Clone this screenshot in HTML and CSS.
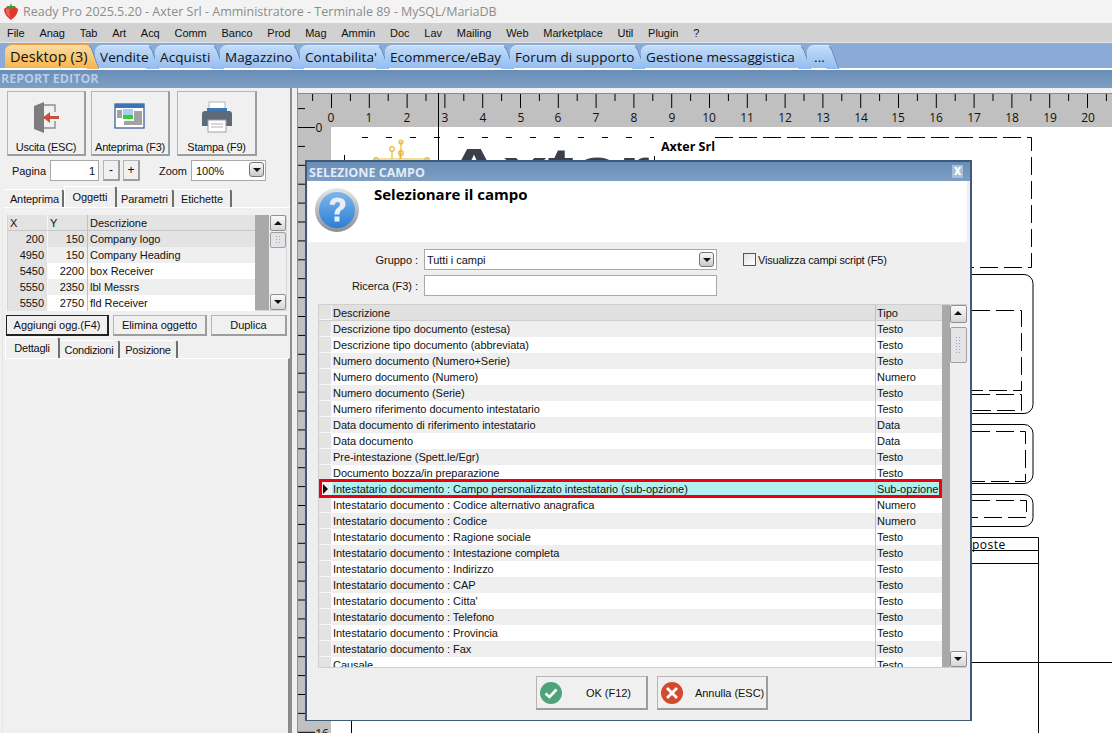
FILE: index.html
```html
<!DOCTYPE html>
<html lang="it">
<head>
<meta charset="utf-8">
<title>Ready Pro</title>
<link rel="stylesheet" href="styles.css">
</head>
<body>
<div class="app">
  <header class="titlebar">
    <svg class="berry" width="16" height="17" viewBox="0 0 16 17"><path d="M1 6 Q4 3 8 4 Q12 3 15 6 Q15 12 8 17 Q1 12 1 6Z" fill="#e2352b"/><path d="M3 6 Q5 5 7 6 Q5 10 8 15 Q2 11 3 6Z" fill="#f0675a"/><path d="M8 0 L9 3 L13 3 L10 5 L8 6 L6 5 L3 3 L7 3Z" fill="#3f9a3a"/></svg>
    <span>Ready Pro 2025.5.20 - Axter Srl - Amministratore - Terminale 89 - MySQL/MariaDB</span>
  </header>
  <nav class="menubar">
    <span>File</span><span>Anag</span><span>Tab</span><span>Art</span><span>Acq</span><span>Comm</span><span>Banco</span><span>Prod</span><span>Mag</span><span>Ammin</span><span>Doc</span><span>Lav</span><span>Mailing</span><span>Web</span><span>Marketplace</span><span>Util</span><span>Plugin</span><span>?</span>
  </nav>
  <div class="tabstrip">
    <div class="apptab active w-desktop">Desktop (3)</div>
    <div class="apptab w-vendite">Vendite</div>
    <div class="apptab w-acquisti">Acquisti</div>
    <div class="apptab w-magazzino">Magazzino</div>
    <div class="apptab w-contab">Contabilita'</div>
    <div class="apptab w-ecom">Ecommerce/eBay</div>
    <div class="apptab w-forum">Forum di supporto</div>
    <div class="apptab w-gest">Gestione messaggistica</div>
    <div class="apptab w-more">...</div>
  </div>
  <div class="sectionbar">REPORT EDITOR</div>
  <div class="workspace">
    <aside class="side">
      <div class="toolrow">
        <button class="toolbtn">
          <svg width="34" height="34" viewBox="0 0 34 34"><path d="M15 5 H26 V12 M26 21 V28 H15" fill="none" stroke="#8d8d8d" stroke-width="1.4"/><path d="M5 6 L15 2 V33 L5 29Z" fill="#7d7d7d"/><path d="M15 16 H30 V19 H15Z" fill="#c9523c"/><path d="M14 17.5 L21 12 V23Z" fill="#c9523c"/></svg>
          <span>Uscita (ESC)</span>
        </button>
        <button class="toolbtn">
          <svg width="34" height="34" viewBox="0 0 34 34"><rect x="2" y="4" width="29" height="24" fill="#fff" stroke="#2f5590" stroke-width="1.2"/><rect x="2" y="4" width="29" height="4" fill="#3d74b8"/><rect x="10" y="9" width="10" height="6" fill="#a9cdf0"/><rect x="10" y="15" width="10" height="4" fill="#2fd12f"/><path d="M4 11 H9 M4 13 H9 M4 15 H9 M4 17 H9 M21 12 H29 M21 14 H29 M21 16 H29 M21 18 H29 M21 20 H29 M11 22 H29 M11 24 H29" stroke="#444" stroke-width="1"/></svg>
          <span>Anteprima (F3)</span>
        </button>
        <button class="toolbtn wide">
          <svg width="34" height="34" viewBox="0 0 34 34"><rect x="9" y="2" width="16" height="7" fill="#fff" stroke="#b5b5b5"/><path d="M7 8 H27 V16 H7Z" fill="#3f76b4"/><path d="M2 14 Q2 11 5 11 H29 Q32 11 32 14 V26 H2Z" fill="#5d6a78"/><rect x="8" y="20" width="18" height="12" fill="#fff" stroke="#a0a0a0"/><path d="M11 24 H23 M11 27 H23" stroke="#b0b0b0"/></svg>
          <span>Stampa (F9)</span>
        </button>
      </div>
      <div class="pagerow">
        <label class="pagelabel">Pagina</label>
        <div class="field pagefield">1</div>
        <button class="mini">-</button>
        <button class="mini">+</button>
        <label class="zoomlabel">Zoom</label>
        <div class="field zoomfield">100%<span class="drop small"></span></div>
      </div>
      <div class="pagetabs">
        <span class="ptab t-ant">Anteprima</span><span class="ptab on t-ogg">Oggetti</span><span class="ptab t-par">Parametri</span><span class="ptab t-eti">Etichette</span>
      </div>
      <div class="sheet">
        <div class="objgrid">
          <div class="objtable">
            <div class="objrow head"><span>X</span><span>Y</span><span>Descrizione</span></div>
            <div class="objrow sel"><span class="n">200</span><span class="n">150</span><span>Company logo</span></div>
            <div class="objrow alt"><span class="n">4950</span><span class="n">150</span><span>Company Heading</span></div>
            <div class="objrow"><span class="n">5450</span><span class="n">2200</span><span>box Receiver</span></div>
            <div class="objrow alt"><span class="n">5550</span><span class="n">2350</span><span>lbl Messrs</span></div>
            <div class="objrow"><span class="n">5550</span><span class="n">2750</span><span>fld Receiver</span></div>
          </div>
          <div class="gutter"></div>
          <div class="vscroll">
            <button class="sbtn up"></button>
            <div class="thumb short"></div>
            <div class="track"></div>
            <button class="sbtn down"></button>
          </div>
        </div>
        <div class="objbtns">
          <button class="plain focus">Aggiungi ogg.(F4)</button>
          <button class="plain el">Elimina oggetto</button>
          <button class="plain du">Duplica</button>
        </div>
        <div class="pagetabs sub">
          <span class="ptab on t-det">Dettagli</span><span class="ptab t-con">Condizioni</span><span class="ptab t-pos">Posizione</span>
        </div>
        <div class="subsheet"></div>
      </div>
    </aside>
    <div class="splitter"></div>
    <main class="stage">
      <svg class="canvas" width="814" height="640" viewBox="298 93 814 640">
        <defs>
          <pattern id="hticks" x="331" y="94" width="37.8" height="14" patternUnits="userSpaceOnUse">
            <path d="M0.5 0 V14 M19.4 0 V7" stroke="#000" fill="none"/>
          </pattern>
          <pattern id="vticks" x="298" y="127" width="20" height="37.8" patternUnits="userSpaceOnUse">
            <path d="M0 0.5 H19 M0 19.4 H7" stroke="#000" fill="none"/>
          </pattern>
        </defs>
        <rect x="298" y="93" width="814" height="640" fill="#c0c0c0"/>
        <rect x="298" y="93" width="814" height="1" fill="#8c8c8c"/>
        <rect x="312" y="94" width="800" height="14" fill="url(#hticks)"/>
        <rect x="298" y="108" width="17" height="625" fill="url(#vticks)"/>
        <rect x="331" y="127" width="781" height="606" fill="#fff"/>
        <g class="rulertext" text-anchor="middle">
          <text x="331" y="122">0</text><text x="369" y="122">1</text><text x="407" y="122">2</text><text x="445" y="122">3</text><text x="483" y="122">4</text><text x="521" y="122">5</text><text x="558" y="122">6</text><text x="596" y="122">7</text><text x="634" y="122">8</text><text x="672" y="122">9</text><text x="709" y="122">10</text><text x="747" y="122">11</text><text x="785" y="122">12</text><text x="823" y="122">13</text><text x="861" y="122">14</text><text x="898" y="122">15</text><text x="936" y="122">16</text><text x="974" y="122">17</text><text x="1012" y="122">18</text><text x="1050" y="122">19</text><text x="1088" y="122">20</text>
          <text x="319" y="132">0</text><text x="322" y="738">16</text>
        </g>
        <g fill="none" stroke="#000">
          <path d="M438.5 93 V162 M344.5 155 V162 M654.5 156 V162"/>
          <path class="dash-s" d="M362 137.5 H654"/>
          <path class="dash-l" d="M715 137.5 H1031.5 V267.5 H972"/>
          <rect x="960" y="274.5" width="73" height="139" rx="9"/>
          <path class="dash-l" d="M972 310.5 H1021.5 V390.5 H972 M972 394.5 H1021.5 V410.5 H972"/>
          <rect x="960" y="424.5" width="73" height="59" rx="9"/>
          <path class="dash-l" d="M972 431.5 H1025.5 V481.5 H972"/>
          <rect x="960" y="494.5" width="73" height="32" rx="9"/>
          <path class="dash-l" d="M972 500.5 H1026.5 V517.5 H972"/>
          <path d="M972 537.5 H1038.5 V733 M972 550.5 H1038.5 M972 563.5 H1038.5 M972 662.5 H1112 M351.5 720 V733"/>
        </g>
        <text class="poste" x="972" y="549">poste</text>
        <text class="company" x="661" y="151">Axter Srl</text>
        <text class="bigbrand" x="445" y="187" textLength="205" lengthAdjust="spacingAndGlyphs">Axter</text>
        <g fill="none" stroke="#e8b93a" stroke-width="1.2">
          <path d="M375 160 V159 H428 V160 M400 159 V150 M401 159 V141"/>
          <circle cx="392" cy="149" r="2.3"/><circle cx="401" cy="153" r="2.3"/><circle cx="401" cy="142" r="2"/><circle cx="376" cy="160" r="2.3"/><circle cx="427" cy="160" r="2.3"/>
          <path d="M392 151 V159"/>
        </g>
      </svg>
    </main>
  </div>

  <section class="dialog">
    <div class="dlgtitle"><span>SELEZIONE CAMPO</span><span class="closex">X</span></div>
    <div class="dlghead">
      <svg width="46" height="46" viewBox="0 0 46 46"><defs><linearGradient id="qb" x1="0" y1="0" x2="0" y2="1"><stop offset="0" stop-color="#7fb6ea"/><stop offset="1" stop-color="#2c7fd6"/></linearGradient><linearGradient id="qr" x1="0" y1="0" x2="0" y2="1"><stop offset="0" stop-color="#e6e6e6"/><stop offset="1" stop-color="#8a8f96"/></linearGradient></defs><circle cx="23" cy="23" r="22" fill="url(#qr)"/><circle cx="23" cy="23" r="18" fill="url(#qb)"/><path d="M15.5 17.5 Q16 10.5 23.5 10.5 Q31.5 10.5 31.5 17 Q31.5 21 27.5 23 Q25.5 24.2 25.5 27.5 H20.5 Q20.5 22.5 24 20.5 Q26 19.3 26 17.2 Q26 15 23.3 15 Q21 15 20.8 18Z" fill="#e8eef8"/><rect x="20.5" y="29.5" width="5" height="5" fill="#e8eef8"/></svg>
      <h1>Selezionare il campo</h1>
    </div>
    <div class="dlgbody">
      <div class="formrow">
        <label>Gruppo :</label>
        <div class="field wide-field">Tutti i campi<span class="drop"></span></div>
        <span class="check"></span><span class="checklabel">Visualizza campi script (F5)</span>
      </div>
      <div class="formrow second">
        <label>Ricerca (F3) :</label>
        <div class="field wide-field"></div>
      </div>
      <div class="fieldgrid">
        <div class="rows">
          <div class="row head"><i></i><span>Descrizione</span><span>Tipo</span></div>
          <div class="row alt"><i></i><span>Descrizione tipo documento (estesa)</span><span>Testo</span></div>
          <div class="row"><i></i><span>Descrizione tipo documento (abbreviata)</span><span>Testo</span></div>
          <div class="row alt"><i></i><span>Numero documento (Numero+Serie)</span><span>Testo</span></div>
          <div class="row"><i></i><span>Numero documento (Numero)</span><span>Numero</span></div>
          <div class="row alt"><i></i><span>Numero documento (Serie)</span><span>Testo</span></div>
          <div class="row"><i></i><span>Numero riferimento documento intestatario</span><span>Testo</span></div>
          <div class="row alt"><i></i><span>Data documento di riferimento intestatario</span><span>Data</span></div>
          <div class="row"><i></i><span>Data documento</span><span>Data</span></div>
          <div class="row alt"><i></i><span>Pre-intestazione (Spett.le/Egr)</span><span>Testo</span></div>
          <div class="row"><i></i><span>Documento bozza/in preparazione</span><span>Testo</span></div>
          <div class="row current"><i></i><span>Intestatario documento : Campo personalizzato intestatario (sub-opzione)</span><span>Sub-opzione</span></div>
          <div class="row"><i></i><span>Intestatario documento : Codice alternativo anagrafica</span><span>Numero</span></div>
          <div class="row alt"><i></i><span>Intestatario documento : Codice</span><span>Numero</span></div>
          <div class="row"><i></i><span>Intestatario documento : Ragione sociale</span><span>Testo</span></div>
          <div class="row alt"><i></i><span>Intestatario documento : Intestazione completa</span><span>Testo</span></div>
          <div class="row"><i></i><span>Intestatario documento : Indirizzo</span><span>Testo</span></div>
          <div class="row alt"><i></i><span>Intestatario documento : CAP</span><span>Testo</span></div>
          <div class="row"><i></i><span>Intestatario documento : Citta'</span><span>Testo</span></div>
          <div class="row alt"><i></i><span>Intestatario documento : Telefono</span><span>Testo</span></div>
          <div class="row"><i></i><span>Intestatario documento : Provincia</span><span>Testo</span></div>
          <div class="row alt"><i></i><span>Intestatario documento : Fax</span><span>Testo</span></div>
          <div class="row"><i></i><span>Causale</span><span>Testo</span></div>
        </div>
        <div class="gutter"></div>
        <div class="vscroll big">
          <button class="sbtn up tall"></button>
          <div class="thumb"></div>
          <div class="track"></div>
          <button class="sbtn down"></button>
        </div>
      </div>
      <div class="dlgbtns">
        <button class="dlgbtn ok">
          <svg width="24" height="24" viewBox="0 0 24 24"><circle cx="12" cy="12" r="11" fill="#4fa37a"/><path d="M6.5 12.5 L10.5 16 L17.5 8.5" fill="none" stroke="#fff" stroke-width="2.6"/></svg>
          <span>OK (F12)</span>
        </button>
        <button class="dlgbtn cancel">
          <svg width="24" height="24" viewBox="0 0 24 24"><circle cx="12" cy="12" r="11" fill="#d14b2f"/><path d="M7 7 L17 17 M17 7 L7 17" fill="none" stroke="#fff" stroke-width="2.8"/></svg>
          <span>Annulla (ESC)</span>
        </button>
      </div>
    </div>
  </section>
</div>
</body>
</html>
```
FILE: styles.css
```css
* { box-sizing: border-box; }
html, body { margin: 0; padding: 0; }
body { width: 1112px; height: 733px; overflow: hidden; background: #f0f0f0; font-family: "Liberation Sans", Arial, sans-serif; font-size: 11px; letter-spacing: -.04px; color: #111; }
button { font: inherit; letter-spacing: inherit; color: inherit; padding: 0; margin: 0; }
.app { position: relative; width: 1112px; height: 733px; overflow: hidden; display: flex; flex-direction: column; }

.titlebar { height: 23px; flex: none; background: #f3f3f3; display: flex; align-items: center; gap: 4px; padding-left: 3px; color: #8c8c8c; font-family: "Open Sans", sans-serif; font-size: 12.5px; letter-spacing: 0; }
.menubar { height: 20px; flex: none; background: #d1d1d1; border-bottom: 1px solid #e4e4e4; display: flex; align-items: center; gap: 14.8px; padding-left: 7px; font-size: 11px; }

.tabstrip { position: relative; z-index: 0; height: 27px; flex: none; background: #8aabd8; display: flex; align-items: flex-end; padding: 0 0 0 5px; font-family: "Open Sans", sans-serif; font-size: 13.5px; border-bottom: 2px solid #fff; }
.apptab { position: relative; height: 23px; margin-right: 6px; padding: 2px 0 0 5px; background: linear-gradient(#c3dcf8, #93bdf0); border-radius: 7px 0 0 0; border-top: 1px solid #d8e8fa; white-space: nowrap; letter-spacing: .1px; }
.apptab::after { content: ""; position: absolute; z-index: -1; top: -1px; right: -6px; width: 12px; height: 23px; background: linear-gradient(#c3dcf8, #93bdf0); border-top: 1px solid #d8e8fa; border-right: 1px solid #5f86b8; border-radius: 0 6px 0 0; transform: skewX(20deg); }
.apptab.active { z-index: 2; height: 24px; font-size: 14.5px; padding-top: 2px; background: linear-gradient(#fbdca4, #f7b44c); border-top-color: #e9a447; }
.apptab.active::after { background: linear-gradient(#fbdca4, #f7b44c); height: 24px; border-top-color: #e9a447; }
.w-desktop { width: 84px; } .w-vendite { width: 54px; } .w-acquisti { width: 59px; } .w-magazzino { width: 74px; } .w-contab { width: 79px; } .w-ecom { width: 119px; } .w-forum { width: 125px; } .w-gest { width: 160px; } .w-more { width: 22px; padding-left: 7px; }

.sectionbar { height: 18px; flex: none; background: linear-gradient(#688db6, #7d9fc5); color: #b8cee6; font-family: "Open Sans", sans-serif; font-weight: 700; font-size: 12.5px; letter-spacing: 0; padding-left: 1px; line-height: 18px; }

.workspace { flex: 1; display: flex; min-height: 0; }
.side { width: 290px; flex: none; padding-top: 3px; }
.splitter { width: 8px; flex: none; border-left: 2px solid #8f8f8f; border-right: 1px solid #8f8f8f; }
.stage { flex: 1; padding-top: 5px; min-width: 0; }
.canvas { display: block; }
.rulertext text { font: 12px "Open Sans", sans-serif; fill: #111; letter-spacing: 0; }
.poste { font: 12px "Open Sans", sans-serif; letter-spacing: .5px; }
.company { font: 700 12.5px "Open Sans", sans-serif; letter-spacing: 0; }
.bigbrand { font: 700 55px "Liberation Sans", sans-serif; fill: #3a3f4b; }
.dash-s { stroke-dasharray: 6 18; }
.dash-l { stroke-dasharray: 18 6; }

.toolrow { display: flex; gap: 5px; padding-left: 7px; }
.toolbtn { width: 79px; height: 65px; background: #f0f0f0; border: 1px solid #b5b5b5; border-right: 2px solid #9d9d9d; border-bottom: 2px solid #9d9d9d; display: flex; flex-direction: column; align-items: center; justify-content: flex-end; padding-bottom: 1px; letter-spacing: -.25px; white-space: nowrap; }
.toolbtn svg { margin-bottom: 7px; }
.toolbtn.wide { width: 80px; margin-left: 2px; }

.pagerow { display: flex; align-items: center; height: 21px; margin-top: 4px; }
.pagelabel { margin-left: 12px; width: 38px; }
.field { background: #fff; border: 1px solid #a8a8a8; position: relative; display: flex; align-items: center; height: 100%; }
.pagefield { width: 49px; justify-content: flex-end; padding-right: 3px; }
.mini { width: 17px; height: 21px; margin-left: 3px; background: #f0f0f0; border: 1px solid #b5b5b5; border-right: 2px solid #9d9d9d; border-bottom: 2px solid #9d9d9d; font-size: 12px; line-height: 1; }
.mini:first-of-type { margin-left: 4px; }
.zoomlabel { margin-left: 19px; width: 32px; }
.zoomfield { width: 75px; padding-left: 4px; }
.drop { position: absolute; right: 2px; top: 2px; width: 15px; height: 15px; background: linear-gradient(#fafafa, #c9c9c9); border: 1px solid #777; border-radius: 3px; }
.drop::after { content: ""; position: absolute; left: 3px; top: 5px; border: 4px solid transparent; border-top: 4px solid #111; border-bottom: 0; }
.drop.small { top: 1px; right: 1px; }

.pagetabs { display: flex; height: 20px; margin: 6px 0 0 3px; align-items: flex-end; letter-spacing: -.1px; }
.ptab { height: 18px; padding-top: 1px; border-top: 1px solid #fff; border-right: 2px solid #6f6f6f; border-radius: 0 3px 0 0; white-space: nowrap; line-height: 16px; background: #f0f0f0; text-align: center; }
.ptab.on { height: 21px; border-left: 1px solid #fff; padding-top: 2px; }
.t-ant { width: 61px; padding-left: 4px; } .t-ogg { width: 53px; } .t-par { width: 57px; } .t-eti { width: 58px; }
.t-det { width: 55px; } .t-con { width: 60px; } .t-pos { width: 58px; }
.pagetabs.sub { letter-spacing: -.25px; }
.sheet { margin-left: 2px; border-top: 1px solid #fff; border-left: 1px solid #e6e6e6; padding: 7px 0 0 4px; height: 526px; }
.objgrid { display: flex; width: 280px; height: 96px; background: #efefef; border: 1px solid #d6d6d6; border-top: 0; }
.objtable { width: 248px; }
.objrow { display: grid; grid-template-columns: 40px 40px 1fr; height: 16px; line-height: 16px; background: #fff; white-space: nowrap; overflow: hidden; }
.objrow span { padding: 0 2px; }
.objrow span:first-child { background: #e3e3e3; border-right: 1px solid #f8f8f8; border-bottom: 1px solid #f8f8f8; }
.objrow span.n { text-align: right; padding-right: 3px; }
.objrow span:nth-child(2) { border-right: 1px solid #c0c0c0; }
.objrow.head { background: #e3e3e3; border-bottom: 1px solid #c8c8c8; }
.objrow.head span { border-bottom: 0; }
.objrow.sel { background: #e3e3e3; }
.objrow.alt { background: #efefef; }
.gutter { width: 14px; background: #a9a9a9; flex: none; }
.fieldgrid .gutter { width: 8px; }
.vscroll { flex: 1; display: flex; flex-direction: column; background: #efefef; }
.sbtn { height: 16px; width: 16px; margin-left: 1px; background: linear-gradient(#fafafa, #d5d5d5); border: 1px solid #909090; border-radius: 2px; position: relative; flex: none; }
.sbtn.tall { height: 18px; }
.sbtn::after { content: ""; position: absolute; left: 3px; top: 5px; border: 4px solid transparent; }
.sbtn.up::after { border-bottom: 4px solid #111; border-top: 0; }
.sbtn.down::after { border-top: 4px solid #111; border-bottom: 0; }
.thumb { height: 36px; width: 16px; margin: 4px 0 0 1px; background: #e2e4e8; border: 1px solid #a0a0a0; border-radius: 2px; flex: none; position: relative; }
.thumb::after { content: ""; position: absolute; left: 4px; right: 4px; top: 8px; bottom: 8px; background: radial-gradient(circle, #a4a9b0 .8px, transparent 1px) 0 0 / 3px 3px; }
.thumb.short { height: 16px; margin-top: 1px; }
.thumb.short::after { top: 2px; bottom: 2px; }
.track { flex: 1; }

.objbtns { display: flex; height: 21px; margin: 4px 0 0 -1px; }
.plain { background: #f0f0f0; border: 1px solid #b5b5b5; border-right: 2px solid #9d9d9d; border-bottom: 2px solid #9d9d9d; white-space: nowrap; }
.plain.focus { width: 103px; border: 1px solid #222; border-right: 2px solid #222; border-bottom: 2px solid #222; }
.plain.el { width: 94px; margin-left: 4px; }
.plain.du { width: 76px; margin-left: 4px; }
.pagetabs.sub { margin: 2px 0 0 -2px; }
.subsheet { margin-left: -2px; height: 376px; border-top: 1px solid #fff; border-right: 2px solid #8a8a8a; width: 285px; }

.dialog { position: absolute; left: 305px; top: 160px; width: 667px; height: 561px; background: #efefef; border: 2px solid #3e5a78; border-bottom-width: 1px; display: flex; flex-direction: column; }
.dlgtitle { height: 19px; flex: none; background: linear-gradient(#688db6, #7d9fc5); color: #e3ecf6; font-family: "Open Sans", sans-serif; font-weight: 700; font-size: 12.5px; letter-spacing: 0; line-height: 21px; padding-left: 2px; display: flex; justify-content: space-between; }
.closex { width: 11px; height: 13px; margin: 3px 7px 0 0; background: #a9bfd8; color: #fff; font-size: 10px; font-weight: 800; line-height: 13px; text-align: center; }
.dlghead { height: 61px; flex: none; margin: 0 3px 0 1px; background: #fff; display: flex; padding: 6px 0 0 6px; gap: 14px; }
.dlghead h1 { margin: -2px 0 0; font-family: "Open Sans", sans-serif; font-size: 15px; letter-spacing: 0; line-height: 18px; font-weight: 700; color: #000; }
.dlgbody { flex: 1; min-height: 0; padding: 7px 3px 0 11px; }
.formrow { display: flex; align-items: center; height: 21px; }
.formrow.second { margin-top: 5px; }
.formrow label { width: 100px; text-align: right; margin-right: 6px; }
.wide-field { width: 293px; padding-left: 2px; }
.check { width: 13px; height: 13px; margin-left: 26px; border: 1px solid #3e5a78; background: linear-gradient(135deg, #e2e2e2, #fff); }
.checklabel { margin-left: 2px; letter-spacing: -.2px; }
.fieldgrid { display: flex; margin-top: 8px; height: 364px; border: 1px solid #cfcfcf; }
.rows { width: 623px; flex: none; overflow: hidden; background: #fff; }
.row { display: grid; grid-template-columns: 13px 543px 67px; height: 16px; line-height: 16px; background: #fff; white-space: nowrap; position: relative; }
.row i { background: #e3e3e3; border-bottom: 1px solid #f8f8f8; border-right: 1px solid #f8f8f8; }
.row span { padding-left: 1px; overflow: hidden; }
.row span:last-child { border-left: 1px solid #c0c0c0; }
.row.alt { background: #efefef; }
.row.head { background: #e0e0e0; border-bottom: 1px solid #cfcfcf; }
.row.current { background: #b0f0ee; z-index: 1; }
.row.current::after { content: ""; position: absolute; left: 0; right: 0; top: -2px; bottom: -1px; border: 3px solid #ee0010; }
.row.current i { background: #efefef; position: relative; }
.row.current i::after { content: ""; position: absolute; left: 4px; top: 3px; border: 5px solid transparent; border-left: 5px solid #111; border-right: 0; }
.vscroll.big { background: #efefef; }
.vscroll.big .sbtn { margin-left: 0; width: 17px; }
.vscroll.big .thumb { margin-left: 0; width: 17px; }
.dlgbtns { display: flex; gap: 9px; margin: 8px 0 0 218px; }
.dlgbtn { width: 112px; height: 34px; background: #f0f0f0; border: 1px solid #b5b5b5; border-right: 2px solid #9d9d9d; border-bottom: 2px solid #9d9d9d; display: flex; align-items: center; padding-left: 2px; white-space: nowrap; }
.dlgbtn.cancel { width: 111px; padding-left: 2px; }
.dlgbtn.ok span { margin-left: 23px; }
.dlgbtn.cancel span { margin-left: 11px; }
```
